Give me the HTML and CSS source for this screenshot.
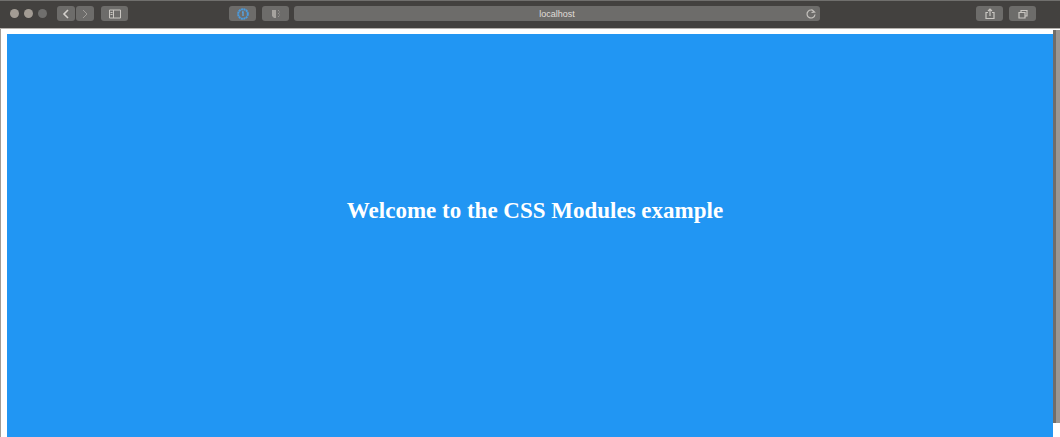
FILE: index.html
```html
<!DOCTYPE html>
<html lang="en">
<head>
<meta charset="utf-8">
<meta name="viewport" content="width=device-width, initial-scale=1">
<title>CSS Modules example</title>
<link rel="stylesheet" href="styles.css">
</head>
<body>
<div class="window">
  <header class="toolbar">
    <div class="lights">
      <button class="light" aria-label="Close"></button>
      <button class="light" aria-label="Minimize"></button>
      <button class="light light-dim" aria-label="Zoom"></button>
    </div>
    <nav class="history">
      <button class="tool nav" aria-label="Back"><svg width="10" height="12" viewBox="0 0 10 12"><path d="M7 2 3 6l4 4" stroke="#d4d1cd" stroke-width="1.6"/></svg></button>
      <button class="tool nav" aria-label="Forward"><svg width="10" height="12" viewBox="0 0 10 12"><path d="m3 2 4 4-4 4" stroke="#a09d99"/></svg></button>
    </nav>
    <button class="tool sidebar" aria-label="Sidebar"><svg width="14" height="12" viewBox="0 0 14 12"><path d="M1.500 2h11v8h-11zM5.500 2v8M2.500 4.500h2M2.500 6.500h2" stroke="#c9c6c1"/></svg></button>
    <div class="extensions">
      <button class="tool" aria-label="Password manager"><svg width="12" height="12" viewBox="0 0 12 12"><circle cx="6" cy="6" r="4.800" stroke="#4a9ce0" stroke-width="2" stroke-dasharray="2 .5"/><path d="M5 4h1v4M6 4v4" stroke="#58a4e2" stroke-width="1.400"/></svg></button>
      <button class="tool" aria-label="Privacy report"><svg width="12" height="12" viewBox="0 0 12 12"><path d="M2 2h4v8H4L2 8z" fill="#a6a39e"/><path d="M8 2.500h1M8 5.500h1M8 8.500h1M9 4h1M9 7h1" stroke="#96938f"/></svg></button>
    </div>
    <div class="address">
      <label class="host"><input class="url" type="text" value="localhost" aria-label="Address"></label>
      <button class="reload" aria-label="Reload"><svg width="12" height="12" viewBox="0 0 12 12"><path d="M9.500 4A4 4 0 1 0 10 6.500M6.500 1.500 9.500 4 6.500 4.500" stroke="#c5c2be" stroke-width="1.200"/></svg></button>
    </div>
    <div class="actions">
      <button class="tool" aria-label="Share"><svg width="12" height="12" viewBox="0 0 12 12"><path d="M4 4.500H2v6h8v-6H8M6 8V1M4 3l2-2 2 2" stroke="#c9c6c1" stroke-width="1.200"/></svg></button>
      <button class="tool" aria-label="Tabs"><svg width="12" height="12" viewBox="0 0 12 12"><path d="M2 4.500h6v5.500H2zM4 4.500v-2h6v5.500H8" stroke="#c9c6c1" stroke-width="1.200"/></svg></button>
    </div>
  </header>
  <div class="viewport">
    <main class="hero"><h1 class="title">Welcome to the CSS Modules example</h1></main>
    <div class="scroll"></div>
  </div>
</div>
</body>
</html>
```
FILE: styles.css
```css
* { box-sizing: border-box; }
body { margin: 0; background: #fff; }
button, input { padding: 0; border: 0; background: none; font: inherit; color: inherit; }
svg { display: block; fill: none; }

.window {
  display: flex;
  flex-direction: column;
  min-height: 100vh;
}

.toolbar {
  display: flex;
  align-items: center;
  height: 29px;
  padding: 0 24px 2px 10px;
  background: #43413f;
  border-top: 1px solid #706f6d;
  border-bottom: 1px solid #b5b1ad;
}

.lights { display: flex; gap: 5px; margin-right: 10px; }
.light { width: 9px; height: 9px; border-radius: 50%; background: #a39c94; }
.light-dim { background: #706f6d; }

.tool {
  display: flex;
  align-items: center;
  justify-content: center;
  width: 27px;
  height: 15px;
  border-radius: 3px;
  background: #6d6c6a;
}
.history { display: flex; gap: 1px; margin-right: 7px; }
.nav { width: 18px; }
.sidebar { margin-right: 101px; }
.extensions { display: flex; gap: 6px; margin-right: 5px; }

.address {
  flex: 1;
  display: flex;
  align-items: center;
  height: 15px;
  padding: 0 3px 0 15px;
  border-radius: 3px;
  background: #6d6c6a;
}
.host { flex: 1; display: flex; }
.url {
  width: 100%;
  height: 15px;
  font: 9px "Liberation Sans", Arial, sans-serif;
  color: #e0deda;
  text-align: center;
}
.actions { display: flex; gap: 6px; margin-left: 156px; }

.viewport {
  flex: 1;
  display: flex;
  padding-top: 1px;
  border-left: 1px solid #a39c94;
}
.hero {
  flex: 1;
  margin: 4px 0 0 6px;
  padding: 163px 0 0 10px;
  background: #2196f3;
}
.title {
  margin: 0;
  font: bold 23px/28px "Liberation Serif", "Times New Roman", serif;
  color: #fff;
  text-align: center;
}
.scroll {
  width: 7px;
  margin-bottom: 14px;
  background: #9b9691;
  border-left: 3px solid #706d69;
}
```
